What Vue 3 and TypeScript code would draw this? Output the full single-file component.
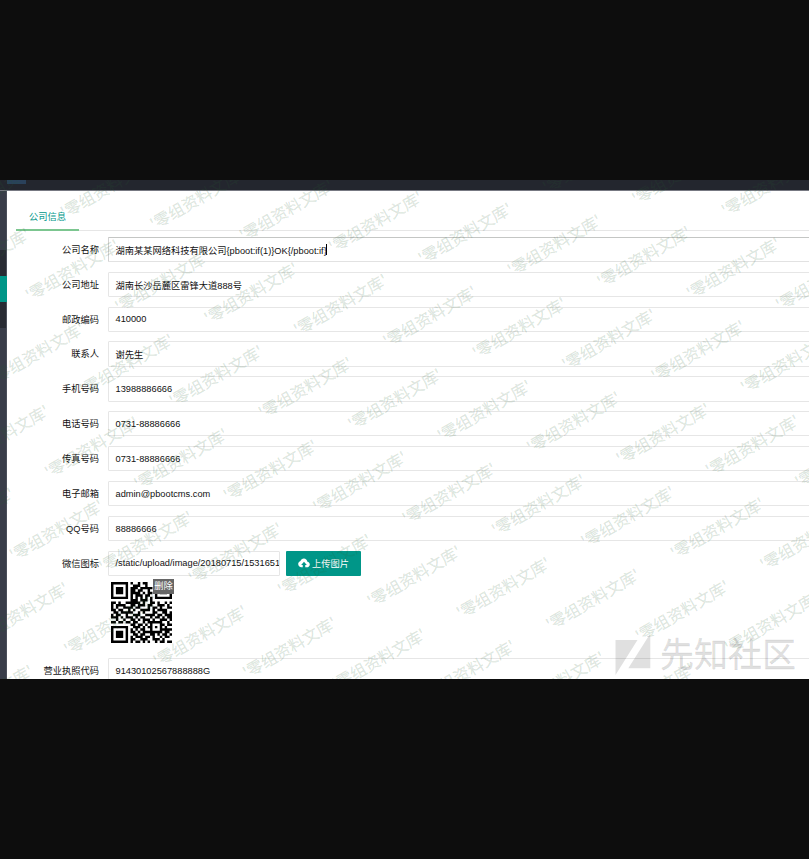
<script setup lang="ts">
interface Field {
  label: string
  value: string
  focused?: boolean
}

const fields: Field[] = [
  { label: '公司名称', value: '湖南某某网络科技有限公司{pboot:if(1)}OK{/pboot:if}', focused: true },
  { label: '公司地址', value: '湖南长沙岳麓区雷锋大道888号' },
  { label: '邮政编码', value: '410000' },
  { label: '联系人', value: '谢先生' },
  { label: '手机号码', value: '13988886666' },
  { label: '电话号码', value: '0731-88886666' },
  { label: '传真号码', value: '0731-88886666' },
  { label: '电子邮箱', value: 'admin@pbootcms.com' },
  { label: 'QQ号码', value: '88886666' },
]

const qrRows: string[] = [
  '1111111010010110001111111',
  '1000001001110010001000001',
  '1011101011101111101011101',
  '1011101011011001001011101',
  '1011101011110101101011101',
  '1000001010111011001000001',
  '1111111010101010101111111',
  '0000000011101110100000000',
  '1101001111110100110100101',
  '1011110011011101100111010',
  '1010011110110001011010011',
  '1101100101001111010111100',
  '0110111110010100011001101',
  '1011001001110011110110111',
  '1110101110101100101101011',
  '0010010011010111010011101',
  '1101101101100101111110010',
  '0000000011011010100011011',
  '1111111001110101101010100',
  '1000001010101100100011111',
  '1011101011010111111110110',
  '1011101001101100110101101',
  '1011101010111011010010110',
  '1000001011001110011101000',
  '1111111010110101001011011',
]
const qrPath = qrRows
  .map((row, y) => [...row].map((c, x) => (c === '1' ? `M${x} ${y}h1v1h-1z` : '')).join(''))
  .join('')

// Repeating diagonal watermark on a slanted lattice
const marks: { x: number; y: number }[] = []
for (let j = -2; j <= 7; j++) {
  for (let i = -6; i <= 10; i++) {
    const x = 333.3 + i * 89.4 - j * 35.1
    const y = 73.5 + i * 11.55 + j * 82.8
    if (x > -90 && x < 809 && y > 0 && y < 550) marks.push({ x, y })
  }
}
</script>

<template>
  <div class="viewer">
    <div class="shot">
      <header class="topbar"><span class="topbar-item"></span></header>
      <div class="body">
        <aside class="side">
          <span class="side-gap"></span>
          <span class="side-dark"></span>
          <span class="side-active"></span>
          <span class="side-dark"></span>
        </aside>
        <main class="panel">
          <nav class="tabs"><span class="tab">公司信息</span></nav>
          <form class="form" @submit.prevent>
            <div v-for="f in fields" :key="f.label" class="row">
              <label class="label">{{ f.label }}</label>
              <div class="input" :class="{ focused: f.focused }">
                <span>{{ f.value }}</span><i v-if="f.focused" class="caret"></i>
              </div>
            </div>
            <div class="row">
              <label class="label">微信图标</label>
              <div class="input short"><span>/static/upload/image/20180715/1531651</span></div>
              <button class="upload" type="button">
                <svg class="cloud" viewBox="0 0 24 20">
                  <path d="M18.8 7.3C18.2 3.4 15.4.8 11.8.8 8.500.8 5.900 2.900 5 6 2.200 6.800.4 9.200.4 12.200c0 3.700 2.800 6.400 6.400 6.400h2.700v-4.800H6.300L12 7.300l5.700 6.500h-3.200v4.800h3c3.500 0 6.100-2.400 6.100-5.700 0-2.900-2-5.100-4.800-5.600z" />
                </svg>
                <span>上传图片</span>
              </button>
            </div>
            <div class="preview">
              <svg class="qr" viewBox="0 0 25 25"><path :d="qrPath" /></svg>
              <span class="remove">删除</span>
            </div>
            <div class="row">
              <label class="label">营业执照代码</label>
              <div class="input"><span>91430102567888888G</span></div>
            </div>
          </form>
        </main>
      </div>
      <svg class="overlay" width="809" height="499" viewBox="0 0 809 499">
        <text
          v-for="(m, k) in marks"
          :key="k"
          class="mark"
          :transform="`translate(${m.x} ${m.y}) rotate(-30)`"
        >'零组资料文库'</text>
        <path class="brand" d="M615.500 460h22l-22 35zM650.300 453.500v34.800h-22z" />
        <text class="brand brand-text" x="660" y="487">先知社区</text>
      </svg>
    </div>
  </div>
</template>

<style>
body {
  margin: 0;
  background: #0d0d0d;
}
</style>

<style scoped>
.viewer {
  box-sizing: border-box;
  width: 809px;
  height: 859px;
  padding-top: 180px;
  overflow: hidden;
  background: #0d0d0d;
  font-family: "Liberation Sans", "Noto Sans CJK SC", sans-serif;
  font-size: 9.25px;
  color: #111;
}
.shot {
  position: relative;
  display: flex;
  flex-direction: column;
  height: 499px;
  overflow: hidden;
  background: #fff;
}
.topbar {
  flex: none;
  height: 10px;
  padding-left: 7px;
  background: #23262e;
  border-bottom: 1px solid #777982;
}
.topbar-item {
  display: block;
  width: 19px;
  height: 4px;
  background: #2a415b;
}
.body {
  display: flex;
  flex: 1;
  min-height: 0;
}
.side {
  flex: none;
  display: flex;
  flex-direction: column;
  width: 6px;
  background: #393d49;
  border-right: 1px solid #4b4f5a;
}
.side-gap {
  height: 59px;
}
.side-dark {
  height: 26px;
  background: #282b33;
}
.side-active {
  height: 26px;
  margin-right: -1px;
  background: #009688;
}
.panel {
  flex: 1;
  min-width: 0;
  overflow: hidden;
}
.tabs {
  display: flex;
  height: 39px;
  margin-left: 9px;
  border-bottom: 1px solid #e6e6e6;
}
.tab {
  box-sizing: border-box;
  height: 40px;
  padding: 0 13px;
  line-height: 52px;
  color: #009688;
  border-bottom: 2px solid #7cc690;
}
.form {
  padding-top: 5.9px;
}
.row {
  display: flex;
  width: 900px;
  height: 25.2px;
  margin-bottom: 9.68px;
}
.label {
  flex: none;
  width: 92px;
  margin-right: 9px;
  line-height: 27px;
  text-align: right;
}
.input {
  box-sizing: border-box;
  display: flex;
  align-items: center;
  flex: 1;
  padding: 0.5px 0 0 6.5px;
  border: 1px solid #e6e6e6;
  border-radius: 1px;
  white-space: nowrap;
  overflow: hidden;
}
.focused {
  border-color: #c4c6c4 #e2e2e2 #e2e2e2 #d2d2d2;
}
.caret {
  width: 1px;
  height: 11px;
  margin-left: -1px;
  background: #000;
}
.short {
  flex: none;
  width: 172px;
}
.upload {
  display: flex;
  align-items: center;
  width: 75px;
  margin-left: 6px;
  padding: 0 0 0 12px;
  border: 0;
  border-radius: 1px;
  background: #009688;
  color: #fff;
  font: inherit;
  white-space: nowrap;
}
.cloud {
  width: 12px;
  height: 10px;
  margin-right: 2px;
  fill: #fff;
}
.preview {
  position: relative;
  width: 66px;
  height: 79.5px;
  margin: -7px 0 0 102px;
  padding: 3.5px 0 0 2px;
  box-sizing: border-box;
}
.qr {
  display: block;
  width: 61px;
  height: 61px;
}
.remove {
  position: absolute;
  top: 0.5px;
  right: 1px;
  width: 21px;
  height: 15px;
  line-height: 15px;
  text-align: center;
  background: #666;
  color: #fff;
}
.overlay {
  position: absolute;
  inset: 0;
}
.mark {
  font-family: "Noto Sans CJK SC", sans-serif;
  font-size: 16px;
  fill: rgba(40, 100, 50, 0.14);
  stroke: rgba(40, 100, 50, 0.07);
  stroke-width: 0.6px;
}
.brand {
  fill: rgba(0, 0, 0, 0.12);
}
.brand-text {
  font-family: "Noto Sans CJK SC", sans-serif;
  font-size: 34px;
  stroke: rgba(0, 0, 0, 0.08);
  stroke-width: 0.8px;
}
</style>
